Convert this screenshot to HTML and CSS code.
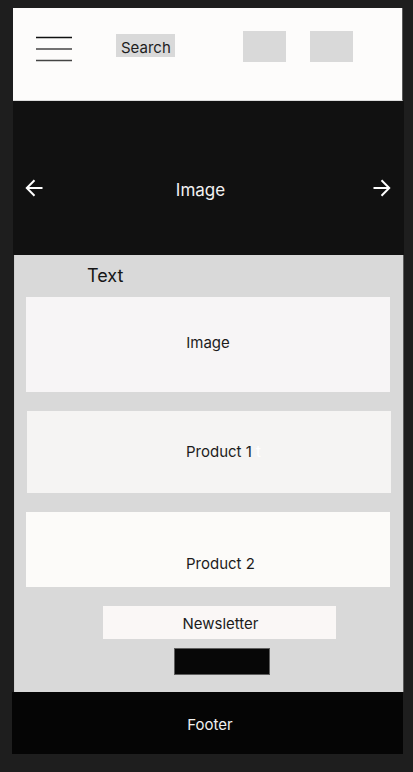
FILE: index.html
```html
<!DOCTYPE html>
<html lang="en">
<head>
<meta charset="utf-8">
<title>Wireframe</title>
<link rel="stylesheet" href="styles.css">
</head>
<body>
<div class="page">
  <header class="topbar">
    <button class="menu" aria-label="Menu">
      <svg width="36" height="26" viewBox="0 0 36 26">
        <line x1="0" y1="1.5" x2="36" y2="1.5" stroke="#111" stroke-width="1.6"/>
        <line x1="0" y1="13" x2="36" y2="13" stroke="#444" stroke-width="1.6"/>
        <line x1="0" y1="24.5" x2="36" y2="24.5" stroke="#444" stroke-width="1.6"/>
      </svg>
    </button>
    <div class="search">Search</div>
    <div class="icon-box first"></div>
    <div class="icon-box second"></div>
  </header>

  <section class="hero">
    <svg class="arrow" width="18" height="18" viewBox="0 0 18 18">
      <path d="M1.8 9H17.5M9.5 1.3L1.8 9L9.5 16.7" fill="none" stroke="#fff" stroke-width="2"/>
    </svg>
    <span class="hero-label">Image</span>
    <svg class="arrow" width="18" height="18" viewBox="0 0 18 18">
      <path d="M16.2 9H0.5M8.5 1.3L16.2 9L8.5 16.7" fill="none" stroke="#fff" stroke-width="2"/>
    </svg>
  </section>

  <main class="content">
    <p class="intro">Text</p>
    <div class="card card-image">Image</div>
    <div class="card card-p1">Product 1 <span class="ghost">t</span></div>
    <div class="card card-p2">Product 2</div>
    <div class="newsletter">Newsletter</div>
    <button class="subscribe" aria-label="Subscribe"></button>
  </main>

  <footer class="footer">Footer</footer>
</div>
</body>
</html>
```
FILE: styles.css
```css
* { box-sizing: border-box; }

html, body {
  margin: 0;
  padding: 0;
  background: #1e1e1e;
}

body {
  font-family: Inter, "Noto Sans", "Liberation Sans", sans-serif;
  color: #1c1c1c;
  height: 772px;
  overflow: hidden;
}

.page {
  width: 392px;
  margin-left: 12px;
  padding-top: 8px;
  display: flex;
  flex-direction: column;
}

/* header */
.topbar {
  margin-left: 1px;
  width: 390px;
  height: 93px;
  background: #fdfcfb;
  border-bottom: 1px solid #dcdcdc;
  border-right: 1px solid #5a5a5a;
  display: flex;
  align-items: flex-start;
  padding-top: 23px;
}

.menu {
  margin: 5px 0 0 23px;
  padding: 0;
  border: 0;
  background: none;
  width: 36px;
  height: 26px;
  display: block;
}
.menu svg { display: block; }

.search {
  margin: 3px 0 0 44px;
  width: 59px;
  height: 23px;
  background: #d9d9d9;
  font-size: 15px;
  line-height: 20px;
  padding-left: 5px;
  padding-top: 4px;
  color: #1e1e1e;
}

.icon-box {
  width: 43px;
  height: 31px;
  background: #d9d9d9;
}
.icon-box.first { margin-left: 68px; }
.icon-box.second { margin-left: 24px; }

/* hero */
.hero {
  margin-left: 1px;
  width: 391px;
  height: 154px;
  background: #111111;
  display: flex;
  align-items: flex-start;
  padding: 78px 13px 0 12px;
}
.arrow { display: block; flex: none; }
.hero-label {
  color: #f2f2f2;
  font-size: 17px;
  line-height: 20px;
  margin-top: 1px;
  flex: 1;
  text-align: center;
  padding-right: 15px;
}

/* content */
.content {
  margin-left: 2px;
  width: 390px;
  height: 437px;
  background: #d9d9d9;
  border-left: 1px solid #cfcfcf;
  border-right: 1px solid #5c5c5c;
  display: flex;
  flex-direction: column;
  align-items: flex-start;
  padding-top: 10px;
}

.intro {
  margin: 0 0 0 72px;
  font-size: 18px;
  line-height: 22px;
  color: #161616;
}

.card {
  width: 364px;
  font-size: 15px;
  line-height: 18px;
  display: flex;
  color: #1c1c1c;
}

.card-image {
  margin: 10px 0 0 11px;
  height: 95px;
  background: #f7f5f6;
  align-items: center;
  justify-content: center;
  padding-bottom: 4px;
}

.card-p1 {
  margin: 19px 0 0 12px;
  height: 82px;
  background: #f5f4f3;
  align-items: center;
  padding-left: 159px;
  white-space: pre;
}
.ghost { color: #ffffff; }

.card-p2 {
  margin: 19px 0 0 11px;
  height: 75px;
  background: #fcfbf9;
  align-items: flex-end;
  padding-left: 160px;
  padding-bottom: 14px;
}

.newsletter {
  margin: 19px 0 0 88px;
  width: 233px;
  height: 33px;
  background: #faf7f6;
  font-size: 15px;
  line-height: 33px;
  text-align: center;
  padding-left: 2px;
  padding-top: 1px;
}

.subscribe {
  margin: 9px 0 0 159px;
  width: 96px;
  height: 27px;
  background: #070707;
  border: 1px solid #5e5e5e;
  padding: 0;
}

/* footer */
.footer {
  width: 391px;
  height: 62px;
  background: #050505;
  color: #f0f0f0;
  font-size: 15px;
  line-height: 62px;
  text-align: center;
  padding-left: 5px;
  padding-top: 2px;
}
```
